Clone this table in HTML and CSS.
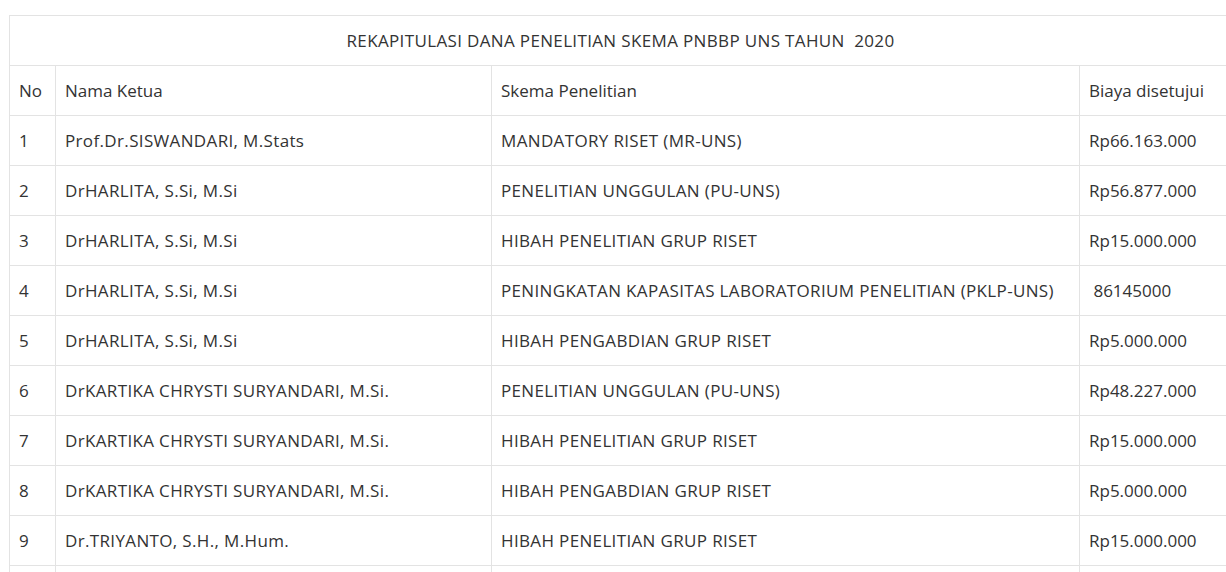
FILE: index.html
```html
<!DOCTYPE html>
<html>
<head>
<meta charset="utf-8">
<link rel="stylesheet" href="styles.css">
</head>
<body>
<div class="wrap">
<table class="rekap">
  <colgroup>
    <col class="c-no">
    <col class="c-nama">
    <col class="c-skema">
    <col class="c-biaya">
  </colgroup>
  <thead>
    <tr><th colspan="4" class="title">REKAPITULASI DANA PENELITIAN SKEMA PNBBP UNS TAHUN &nbsp;2020</th></tr>
    <tr><td>No</td><td>Nama Ketua</td><td>Skema Penelitian</td><td>Biaya disetujui</td></tr>
  </thead>
  <tbody>
    <tr><td>1</td><td class="nama">Prof.Dr.SISWANDARI, M.Stats</td><td class="skema">MANDATORY RISET (MR-UNS)</td><td>Rp66.163.000</td></tr>
    <tr><td>2</td><td class="nama">DrHARLITA, S.Si, M.Si</td><td class="skema">PENELITIAN UNGGULAN (PU-UNS)</td><td>Rp56.877.000</td></tr>
    <tr><td>3</td><td class="nama">DrHARLITA, S.Si, M.Si</td><td class="skema">HIBAH PENELITIAN GRUP RISET</td><td>Rp15.000.000</td></tr>
    <tr><td>4</td><td class="nama">DrHARLITA, S.Si, M.Si</td><td class="skema">PENINGKATAN KAPASITAS LABORATORIUM PENELITIAN (PKLP-UNS)</td><td>&nbsp;86145000</td></tr>
    <tr><td>5</td><td class="nama">DrHARLITA, S.Si, M.Si</td><td class="skema">HIBAH PENGABDIAN GRUP RISET</td><td>Rp5.000.000</td></tr>
    <tr><td>6</td><td class="nama">DrKARTIKA CHRYSTI SURYANDARI, M.Si.</td><td class="skema">PENELITIAN UNGGULAN (PU-UNS)</td><td>Rp48.227.000</td></tr>
    <tr><td>7</td><td class="nama">DrKARTIKA CHRYSTI SURYANDARI, M.Si.</td><td class="skema">HIBAH PENELITIAN GRUP RISET</td><td>Rp15.000.000</td></tr>
    <tr><td>8</td><td class="nama">DrKARTIKA CHRYSTI SURYANDARI, M.Si.</td><td class="skema">HIBAH PENGABDIAN GRUP RISET</td><td>Rp5.000.000</td></tr>
    <tr><td>9</td><td class="nama">Dr.TRIYANTO, S.H., M.Hum.</td><td class="skema">HIBAH PENELITIAN GRUP RISET</td><td>Rp15.000.000</td></tr>
    <tr><td></td><td></td><td></td><td></td></tr>
  </tbody>
</table>
</div>
</body>
</html>
```
FILE: styles.css
```css
html, body {
  margin: 0;
  padding: 0;
  background: #fff;
}
body {
  font-family: "Open Sans", "Noto Sans", sans-serif;
  font-size: 17px;
  color: #333;
  overflow: hidden;
  height: 572px;
}
.wrap {
  padding: 15px 0 0 9px;
  width: 1300px;
}
.rekap {
  border-collapse: collapse;
  table-layout: fixed;
  width: 1222px;
}
.c-no { width: 46px; }
.c-nama { width: 436px; }
.c-skema { width: 588px; }
.c-biaya { width: 152px; }
.rekap th,
.rekap td {
  border: 1px solid #e3e3e3;
  height: 50px;
  padding: 0 9px;
  text-align: left;
  vertical-align: middle;
  font-weight: normal;
  white-space: nowrap;
  box-sizing: border-box;
}
.rekap th.title {
  text-align: center;
  letter-spacing: 0.35px;
}
.rekap td.nama {
  letter-spacing: 0.35px;
}
.rekap td.skema {
  letter-spacing: 0.35px;
}
```
